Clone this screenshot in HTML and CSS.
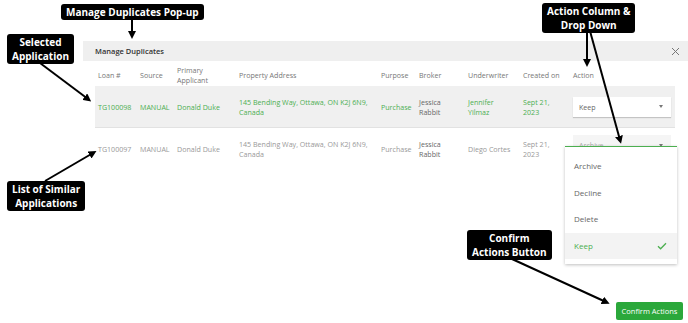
FILE: index.html
```html
<!DOCTYPE html>
<html lang="en">
<head>
    <meta charset="UTF-8">
    <meta name="viewport" content="width=device-width, initial-scale=1.0">
    <title>Manage Duplicates</title>
    <link rel="stylesheet" href="styles.css">
</head>
<body>
    <div class="page">
        <!-- Dialog -->
        <div class="dialog">
            <div class="dialog-header">
                <span class="dialog-title">Manage Duplicates</span>
                <svg class="close" width="9" height="9" viewBox="0 0 9 9"><path d="M1 1L8 8M8 1L1 8" stroke="#777" stroke-width="1" fill="none"/></svg>
            </div>

            <div class="table">
                <div class="row head">
                    <div class="cell">Loan #</div>
                    <div class="cell">Source</div>
                    <div class="cell">Primary<br>Applicant</div>
                    <div class="cell">Property Address</div>
                    <div class="cell">Purpose</div>
                    <div class="cell">Broker</div>
                    <div class="cell">Underwriter</div>
                    <div class="cell">Created on</div>
                    <div class="cell">Action</div>
                </div>

                <div class="row selected">
                    <div class="cell">TG100098</div>
                    <div class="cell">MANUAL</div>
                    <div class="cell">Donald Duke</div>
                    <div class="cell">145 Bending Way, Ottawa, ON K2J 6N9,<br>Canada</div>
                    <div class="cell">Purchase</div>
                    <div class="cell broker">Jessica<br>Rabbit</div>
                    <div class="cell">Jennifer<br>Yilmaz</div>
                    <div class="cell">Sept 21,<br>2023</div>
                    <div class="cell">
                        <div class="select">Keep <span class="caret"></span></div>
                    </div>
                </div>

                <div class="row similar">
                    <div class="cell">TG100097</div>
                    <div class="cell">MANUAL</div>
                    <div class="cell">Donald Duke</div>
                    <div class="cell">145 Bending Way, Ottawa, ON K2J 6N9,<br>Canada</div>
                    <div class="cell">Purchase</div>
                    <div class="cell broker">Jessica<br>Rabbit</div>
                    <div class="cell">Diego Cortes</div>
                    <div class="cell">Sept 21,<br>2023</div>
                    <div class="cell action">
                        <div class="select open">Archive <span class="caret"></span></div>
                        <ul class="menu">
                            <li>Archive</li>
                            <li>Decline</li>
                            <li>Delete</li>
                            <li class="active">Keep
                                <svg width="10" height="8" viewBox="0 0 10 8"><path d="M1 4.2L3.6 6.8L9 1.2" stroke="#4caf50" stroke-width="1.3" fill="none"/></svg>
                            </li>
                        </ul>
                    </div>
                </div>
            </div>

            <div class="dialog-footer">
                <button class="confirm">Confirm Actions</button>
            </div>
        </div>

        <!-- Annotations -->
        <svg class="arrows" width="688" height="323" viewBox="0 0 688 323">
            <defs>
                <marker id="head" markerWidth="4" markerHeight="4" refX="2" refY="2" orient="auto" markerUnits="strokeWidth">
                    <path d="M0 0L4 2L0 4Z" fill="#000"/>
                </marker>
            </defs>
            <g stroke="#000" stroke-width="2" marker-end="url(#head)">
                <line x1="132" y1="20" x2="132" y2="35"/>
                <line x1="40" y1="63" x2="88" y2="99"/>
                <line x1="587" y1="31" x2="587" y2="63"/>
                <line x1="590" y1="31" x2="620" y2="140"/>
                <line x1="45" y1="181" x2="93" y2="153"/>
                <line x1="512" y1="259" x2="606" y2="302"/>
            </g>
        </svg>

        <div class="label label-popup">Manage Duplicates Pop-up</div>
        <div class="label label-selected">Selected<br>Application</div>
        <div class="label label-action">Action Column &amp;<br>Drop Down</div>
        <div class="label label-similar">List of Similar<br>Applications</div>
        <div class="label label-confirm">Confirm<br>Actions Button</div>
    </div>
</body>
</html>
```

FILE: styles.css
```css
body {
    margin: 0;
    background: #fff;
    font-family: "Open Sans", Arial, sans-serif;
}

.page {
    position: relative;
    width: 688px;
    height: 323px;
    overflow: hidden;
}

.dialog {
    margin: 41px 0 0 83px;
    width: 605px;
}

.dialog-header {
    height: 20px;
    background: #efefef;
    display: flex;
    align-items: center;
    justify-content: space-between;
    padding: 0 8px 0 12px;
}

.dialog-title {
    font-size: 7.5px;
    font-weight: 600;
    color: #333;
}

.table {
    padding: 0 13px 0 12px;
    font-size: 7.1px;
    line-height: 10px;
}

.row {
    display: grid;
    grid-template-columns: 42px 37px 62px 142px 38px 49px 55px 50px 1fr;
    align-items: center;
}

.cell {
    padding-left: 3px;
}

.head {
    height: 22px;
    color: #777;
    margin-top: 3px;
}

.selected {
    height: 41px;
    background: #f0f0f0;
    color: #4caf50;
    border-bottom: 1px solid #e2e2e2;
}

.similar {
    height: 42px;
    color: #999;
}

.broker {
    color: #666;
}

.select {
    width: 98px;
    height: 20px;
    box-sizing: border-box;
    background: #fff;
    color: #666;
    display: flex;
    align-items: center;
    justify-content: space-between;
    padding: 0 8px 0 6px;
    box-shadow: 0 1px 1px rgba(0, 0, 0, 0.18);
}

.caret {
    width: 0;
    height: 0;
    border-left: 2.5px solid transparent;
    border-right: 2.5px solid transparent;
    border-top: 3px solid #777;
}

.action {
    position: relative;
    align-self: start;
    padding-top: 7px;
}

.select.open {
    background: #f5f5f5;
    box-shadow: none;
    color: #aaa;
}

.menu {
    position: absolute;
    left: -5px;
    top: 18px;
    width: 112px;
    margin: 0;
    padding: 6px 0 5px;
    list-style: none;
    background: #fff;
    border-top: 1.5px solid #4caf50;
    box-shadow: 0 1px 3px rgba(0, 0, 0, 0.25);
    font-size: 8px;
    color: #666;
}

.menu li {
    height: 26.5px;
    display: flex;
    align-items: center;
    justify-content: space-between;
    padding: 0 10px 0 9px;
}

.menu li.active {
    background: #f3f3f3;
    color: #4caf50;
}

.dialog-footer {
    display: flex;
    justify-content: flex-end;
    padding-right: 5px;
    margin-top: 132px;
}

.confirm {
    background: #2ba83b;
    color: #fff;
    border: none;
    border-radius: 2px;
    font-family: "Open Sans", Arial, sans-serif;
    font-size: 7.5px;
    height: 18px;
    width: 67px;
    padding: 0;
}

.arrows {
    position: absolute;
    left: 0;
    top: 0;
    pointer-events: none;
}

.label {
    position: absolute;
    background: #000;
    color: #fff;
    font-family: "Open Sans", Arial, sans-serif;
    font-weight: 700;
    font-size: 10px;
    line-height: 14px;
    text-align: center;
    border-radius: 3px;
    padding: 1px 5px;
    white-space: nowrap;
}

.label-popup {
    left: 61px;
    top: 4px;
}

.label-selected {
    left: 7px;
    top: 34px;
}

.label-action {
    left: 542px;
    top: 3px;
}

.label-similar {
    left: 7px;
    top: 181px;
}

.label-confirm {
    left: 467px;
    top: 230px;
}
```
